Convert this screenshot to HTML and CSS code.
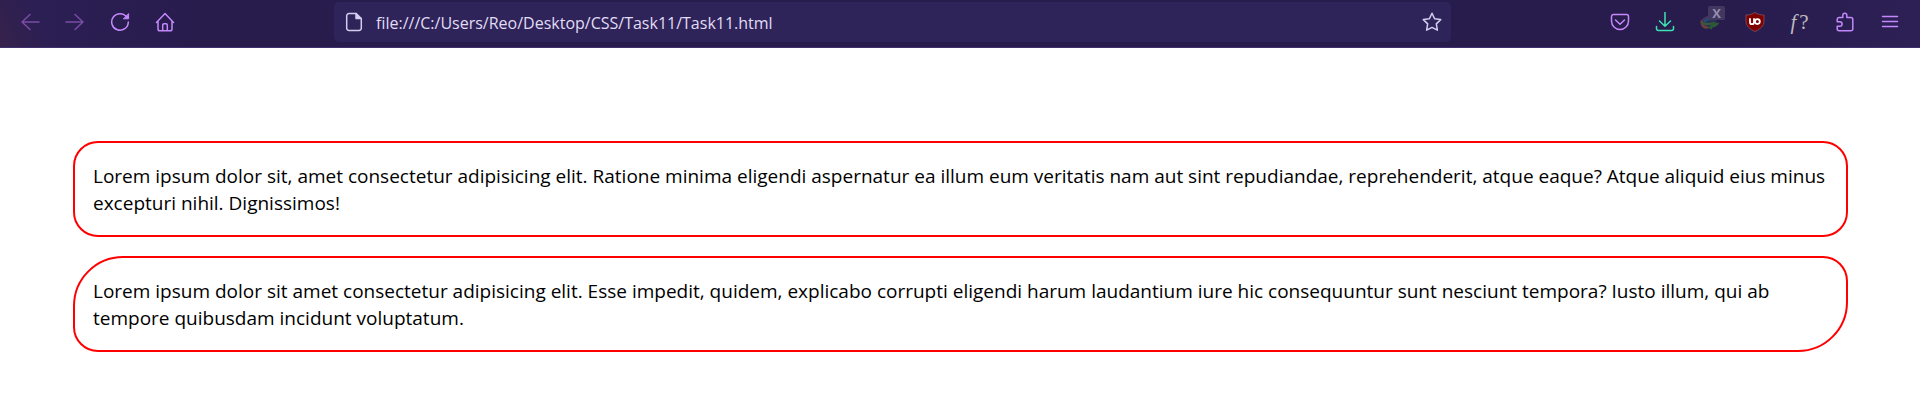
FILE: index.html
```html
<!DOCTYPE html>
<html lang="en">
<head>
<meta charset="utf-8">
<meta name="viewport" content="width=device-width, initial-scale=1">
<title>Task11</title>
<link rel="stylesheet" href="styles.css">
</head>
<body>
<header class="toolbar">
  <nav class="group" aria-label="Navigation">
    <button class="tool" aria-label="Back" disabled><svg viewBox="0 0 20 20"><path d="M19 10H2M10 2.500L2 10l8 7.500"/></svg></button>
    <button class="tool" aria-label="Forward" disabled><svg viewBox="0 0 20 20"><path d="M1 10h17M10 2.500l8 7.500-8 7.500"/></svg></button>
    <button class="tool" aria-label="Reload"><svg viewBox="0 0 20 20"><path d="M16.800 5.200A8.300 8.300 0 1 0 18.300 10"/><path d="M18.600 2v4.800h-4.800z" class="solid" stroke-width="1"/></svg></button>
    <button class="tool" aria-label="Home"><svg viewBox="0 0 20 20"><path d="M1.500 10.500L10 1.500l8.500 9M3 9v8a1.800 1.800 0 0 0 1.800 1.800h10.400A1.800 1.800 0 0 0 17 17V9M7.700 18.500V13a1.200 1.200 0 0 1 1.200-1.200h2.200a1.200 1.200 0 0 1 1.200 1.200v5.500"/></svg></button>
  </nav>
  <div class="address">
    <svg class="page" viewBox="0 0 20 20" aria-hidden="true"><path d="M12 1.500H5A2.300 2.300 0 0 0 2.700 3.800v12.400A2.300 2.300 0 0 0 5 18.500h10a2.300 2.300 0 0 0 2.300-2.300V7z"/><path class="solid" d="M12 1.500V6.500h5.300z"/></svg>
    <input class="url" type="text" aria-label="Address" value="file:///C:/Users/Reo/Desktop/CSS/Task11/Task11.html">
    <button class="star" aria-label="Bookmark"><svg viewBox="0 0 20 20"><path d="M10 1.300l2.600 5.500 6.100.8-4.400 4.300 1.100 6.300L10 15.400l-5.400 2.800 1.100-6.300L1.300 7.600l6.100-.8z"/></svg></button>
  </div>
  <div class="group">
    <button class="tool" aria-label="Pocket"><svg viewBox="0 0 20 20"><path d="M3.500 2.500h13a2 2 0 0 1 2 2V9a8.500 8.500 0 0 1-17 0V4.500a2 2 0 0 1 2-2zM5.500 8l4.500 4.200L14.500 8"/></svg></button>
    <button class="tool download" aria-label="Downloads"><svg viewBox="0 0 20 20"><path d="M10 .5v13.500M4.500 9l5.500 5.300L15.500 9M1.500 14.500v2A2 2 0 0 0 3.500 18.500h13a2 2 0 0 0 2-2v-2"/></svg></button>
    <button class="tool manager" aria-label="Download manager">
      <svg viewBox="0 0 20 20"><ellipse cx="9.500" cy="11" rx="7.500" ry="5.500" fill="#29324f" stroke="none"/><path d="M15 5C9 3 2 6 1.500 11" stroke="#4d3c63"/><path d="M1.500 9.500C2 14 4 15.500 7 15.500" stroke="#68413b" stroke-width="2.500"/><path d="M5 9c3-3 6-3 9-2" stroke="#254b7a" stroke-width="2.500"/><path d="M3 11c4 2 8 1 11 0" stroke="#365a3e" stroke-width="2"/><path d="M19.500 10.500l-8.500 1v2.500l-4 1.500 5 2v-2c4-.5 6-2 7.500-5z" fill="#2c5833" stroke="none"/></svg>
      <span class="badge">X</span>
    </button>
    <button class="tool shield" aria-label="Content blocker"><svg viewBox="0 0 20 20"><path d="M10 .5C7 2.500 4.500 3 1 3v6c0 5 3.500 8 9 10.500 5.500-2.500 9-5.500 9-10.500V3c-3.500 0-6-.5-9-2.500z" fill="#800000" stroke="#7b4458" stroke-width="1"/><path d="M5 7v3.200a2 2 0 0 0 4 0V7" stroke="#fff" stroke-width="1.800"/><circle cx="12.400" cy="9.600" r="2.400" stroke="#fff" stroke-width="1.800"/></svg></button>
    <button class="tool font" aria-label="Font finder"><i>f</i><span>?</span></button>
    <button class="tool" aria-label="Extensions"><svg viewBox="0 0 20 20"><path d="M2.200 9V7.500a2 2 0 0 1 2-2h3.600V3.200a2 2 0 0 1 4 0v2.300h4a2 2 0 0 1 2 2v9.300a2 2 0 0 1-2 2H4.200a2 2 0 0 1-2-2v-2.500h2.600a2.300 2.300 0 0 0 0-4.600H2.200z"/></svg></button>
    <button class="tool" aria-label="Menu"><svg viewBox="0 0 20 20"><path d="M2.500 4.500h15M2.500 9.500h15M2.500 14.500h15"/></svg></button>
  </div>
</header>
<main class="content">
  <p class="box">Lorem ipsum dolor sit, amet consectetur adipisicing elit. Ratione minima eligendi aspernatur ea illum eum veritatis nam aut sint repudiandae, reprehenderit, atque eaque? Atque aliquid eius minus excepturi nihil. Dignissimos!</p>
  <p class="box leaf">Lorem ipsum dolor sit amet consectetur adipisicing elit. Esse impedit, quidem, explicabo corrupti eligendi harum laudantium iure hic consequuntur sunt nesciunt tempora? Iusto illum, qui ab tempore quibusdam incidunt voluptatum.</p>
</main>
</body>
</html>
```
FILE: styles.css
```css
* {
  box-sizing: border-box;
}

body {
  margin: 0;
  background: #fff;
  color: #000;
  font-family: "Open Sans", "Noto Sans", sans-serif;
}

.toolbar {
  display: flex;
  align-items: center;
  height: 48px;
  padding: 0 8px 3px 7px;
  border-bottom: 1px solid #40306f;
  background:
    linear-gradient(62deg, #38224c 0, #30204f 24px, transparent 50px),
    linear-gradient(90deg, #2c1f55 0, #281c4d 200px, #281c4d 90%, #2c2055 100%);
}

.group {
  display: flex;
}

button {
  padding: 0;
  border: 0;
  background: none;
  color: inherit;
}

svg {
  display: block;
  width: 20px;
  height: 20px;
  fill: none;
  stroke: currentColor;
  stroke-width: 1.5;
  stroke-linecap: round;
  stroke-linejoin: round;
}

.solid {
  fill: currentColor;
}

.tool {
  position: relative;
  display: flex;
  align-items: center;
  justify-content: center;
  width: 45px;
  height: 40px;
  color: #c488fc;
}

.tool:disabled {
  color: #7a4ca6;
}

.address {
  display: flex;
  flex: 1;
  align-items: center;
  height: 40px;
  margin: 0 146px 0 147px;
  padding: 0 9px 0 10px;
  border-radius: 5px;
  background: #2e245a;
  color: #d5cdef;
}

.url {
  flex: 1;
  min-width: 0;
  margin: 0 12px;
  padding: 2px 0 0;
  border: 0;
  outline: 0;
  background: none;
  color: #e2dcf5;
  font: 16px/24px "Open Sans", "Noto Sans", sans-serif;
}

.download {
  color: #3fe1b0;
}

.badge {
  position: absolute;
  top: 4px;
  right: 7px;
  width: 17px;
  border-radius: 2px;
  background: #42385f;
  color: #948daf;
  font: bold 13px/14px "Open Sans", sans-serif;
}

.font {
  gap: 3px;
  color: #bdbabd;
  font: 21px/24px "Liberation Serif", serif;
}

.content {
  display: grid;
  gap: 19px;
  padding: 93px 72px 60px 73px;
}

.box {
  margin: 0;
  padding: 20px 18px 18px;
  border: 2px solid #f00;
  border-radius: 25px;
  font-size: 19px;
  line-height: 27px;
}

.leaf {
  border-top-left-radius: 50px;
  border-bottom-right-radius: 50px;
}
```
